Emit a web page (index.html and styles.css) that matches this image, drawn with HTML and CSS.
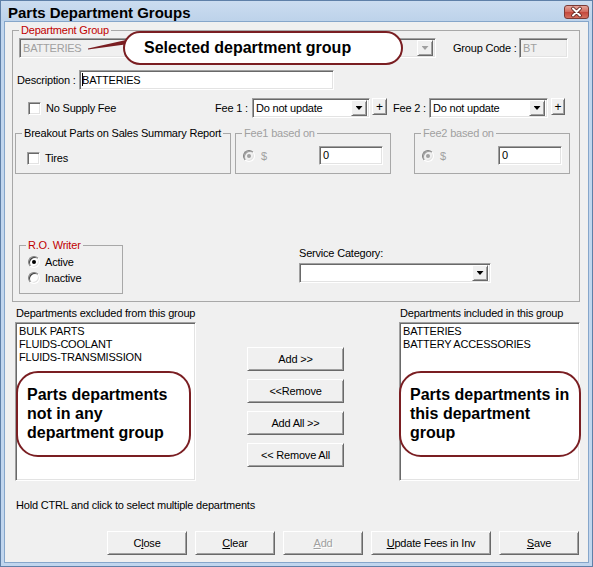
FILE: index.html
```html
<!DOCTYPE html>
<html lang="en">
<head>
    <meta charset="UTF-8">
    <title>Parts Department Groups</title>
    <link rel="stylesheet" href="styles.css">
</head>
<body>
    <div class="window">
        <div class="titlebar">
            <span class="title">Parts Department Groups</span>
            <span class="close-btn">
                <svg width="25" height="14" viewBox="0 0 25 14">
                    <path d="M9 3.5 L16 10.5 M16 3.5 L9 10.5" stroke="#5a1f1a" stroke-width="3.6" stroke-linecap="round"/>
                    <path d="M9 3.5 L16 10.5 M16 3.5 L9 10.5" stroke="#fff" stroke-width="2" stroke-linecap="round"/>
                </svg>
            </span>
        </div>

        <div class="client">
            <fieldset class="group main-group">
                <legend class="red">Department Group</legend>

                <div class="row row-group">
                    <div class="combo sunken disabled-field combo-group">
                        <span class="combo-text gray">BATTERIES</span>
                        <span class="drop raised off"></span>
                    </div>
                    <span class="lbl lbl-code">Group Code :</span>
                    <div class="field sunken disabled-field field-code"><span class="gray">BT</span></div>

                    <!-- callout -->
                    <svg class="tail" width="40" height="14" viewBox="0 0 40 14">
                        <polygon points="1,10.6 38,2.2 38,6.6 1,11.4" fill="#7a1e22"/>
                    </svg>
                    <div class="bubble bubble-top">Selected department group</div>
                </div>

                <div class="row row-desc">
                    <span class="lbl lbl-desc">Description :</span>
                    <div class="field sunken field-desc"><span class="caret"></span>BATTERIES</div>
                </div>

                <div class="row row-fee">
                    <span class="check sunken"></span>
                    <span class="lbl lbl-supply">No Supply Fee</span>
                    <span class="lbl lbl-fee1">Fee 1 :</span>
                    <div class="combo sunken combo-fee1">
                        <span class="combo-text">Do not update</span>
                        <span class="drop raised"></span>
                    </div>
                    <span class="plus raised plus1">+</span>
                    <span class="lbl lbl-fee2">Fee 2 :</span>
                    <div class="combo sunken combo-fee2">
                        <span class="combo-text">Do not update</span>
                        <span class="drop raised"></span>
                    </div>
                    <span class="plus raised plus2">+</span>
                </div>

                <div class="row row-boxes">
                    <fieldset class="group box-breakout">
                        <legend>Breakout Parts on Sales Summary Report</legend>
                        <div class="check-row">
                            <span class="check sunken"></span>
                            <span class="lbl">Tires</span>
                        </div>
                    </fieldset>
                    <fieldset class="group box-fee box-fee1">
                        <legend class="gray-label">Fee1 based on</legend>
                        <div class="fee-row">
                            <span class="radio off checked"></span>
                            <span class="lbl gray-label dollar">$</span>
                            <div class="field sunken field-amt">0</div>
                        </div>
                    </fieldset>
                    <fieldset class="group box-fee box-fee2">
                        <legend class="gray-label">Fee2 based on</legend>
                        <div class="fee-row">
                            <span class="radio off checked"></span>
                            <span class="lbl gray-label dollar">$</span>
                            <div class="field sunken field-amt">0</div>
                        </div>
                    </fieldset>
                </div>

                <div class="row row-writer">
                    <fieldset class="group box-writer">
                        <legend class="red">R.O. Writer</legend>
                        <div class="radio-row first">
                            <span class="radio checked"></span>
                            <span class="lbl">Active</span>
                        </div>
                        <div class="radio-row">
                            <span class="radio"></span>
                            <span class="lbl">Inactive</span>
                        </div>
                    </fieldset>
                    <div class="service">
                        <div class="lbl service-label">Service Category:</div>
                        <div class="combo sunken combo-service">
                            <span class="combo-text"></span>
                            <span class="drop raised"></span>
                        </div>
                    </div>
                </div>
            </fieldset>

            <div class="lists">
                <div class="list-col list-left">
                    <div class="lbl list-label">Departments excluded from this group</div>
                    <div class="listbox sunken">
                        <div class="item">BULK PARTS</div>
                        <div class="item">FLUIDS-COOLANT</div>
                        <div class="item">FLUIDS-TRANSMISSION</div>
                        <div class="bubble bubble-list bubble-left">Parts departments<br>not in any<br>department group</div>
                    </div>
                </div>

                <div class="move-col">
                    <button class="btn raised move">Add &gt;&gt;</button>
                    <button class="btn raised move">&lt;&lt;Remove</button>
                    <button class="btn raised move">Add All &gt;&gt;</button>
                    <button class="btn raised move">&lt;&lt; Remove All</button>
                </div>

                <div class="list-col list-right">
                    <div class="lbl list-label">Departments included in this group</div>
                    <div class="listbox sunken">
                        <div class="item">BATTERIES</div>
                        <div class="item">BATTERY ACCESSORIES</div>
                        <div class="bubble bubble-list bubble-right">Parts departments in<br>this department<br>group</div>
                    </div>
                </div>
            </div>

            <div class="hint">Hold CTRL and click to select multiple departments</div>

            <div class="actions">
                <button class="btn raised act">C<u>l</u>ose</button>
                <button class="btn raised act"><u>C</u>lear</button>
                <button class="btn raised act btn-off"><u>A</u>dd</button>
                <button class="btn raised act act-wide"><u>U</u>pdate Fees in Inv</button>
                <button class="btn raised act"><u>S</u>ave</button>
            </div>
        </div>
    </div>
</body>
</html>
```

FILE: styles.css
```css
body {
    margin: 0;
    font-family: "Liberation Sans", Arial, sans-serif;
    font-size: 11px;
    letter-spacing: -0.2px;
    color: #000;
    background: #fff;
}
.window {
    width: 593px;
    height: 567px;
    box-sizing: border-box;
    border: 1px solid #5f80a8;
    background: #c1d6ee;
    display: flex;
    flex-direction: column;
}
.titlebar {
    height: 20px;
    flex: none;
    display: flex;
    align-items: flex-start;
    padding: 0 3px 0 7px;
    background: linear-gradient(#cbdcf0, #bdd2ea);
}
.title {
    flex: 1;
    font-weight: bold;
    font-size: 15px;
    letter-spacing: 0;
    line-height: 15px;
    margin-top: 4px;
}
.close-btn {
    width: 25px;
    height: 14px;
    margin-top: 4px;
    border: 1px solid #7b3a35;
    border-radius: 3px;
    background: linear-gradient(#e5a59b, #d0685c 50%, #c4473b 51%, #d36f5f);
    display: flex;
    align-items: center;
    justify-content: center;
    box-sizing: border-box;
}
.close-btn svg {
    flex: none;
}
.client {
    flex: 1;
    margin: 0 3px 3px;
    border: 1px solid #86a6ca;
    background: #f0f0f0;
}

/* common bits */
.lbl {
    white-space: nowrap;
    line-height: 14px;
}
.red {
    color: #c00000;
}
.gray,
.gray-label {
    color: #a0a0a0;
}
.sunken {
    box-sizing: border-box;
    border: 1px solid;
    border-color: #a0a0a0 #fff #fff #a0a0a0;
    box-shadow: inset 1px 1px 0 #696969, inset -1px -1px 0 #e3e3e3;
    background: #fff;
}
.raised {
    box-sizing: border-box;
    border: 1px solid;
    border-color: #fff #696969 #696969 #fff;
    box-shadow: inset 1px 1px 0 #f0f0f0, inset -1px -1px 0 #a0a0a0;
    background: #f0f0f0;
}
.disabled-field {
    background: #f0f0f0;
}
.group {
    box-sizing: border-box;
    margin: 0;
    padding: 0;
    min-width: 0;
    border: 1px solid #a8a8a8;
}
.group legend {
    padding: 0 2px;
    margin-left: 6px;
    line-height: 14px;
    white-space: nowrap;
}
.row {
    display: flex;
    align-items: center;
}
.field {
    height: 20px;
    padding-left: 3px;
    line-height: 18px;
    white-space: nowrap;
}
.caret {
    display: inline-block;
    width: 1px;
    height: 13px;
    margin-right: -1px;
    vertical-align: -2px;
    background: #000;
}
.combo {
    height: 20px;
    display: flex;
    align-items: center;
    padding: 2px;
}
.combo-text {
    flex: 1;
    padding-left: 1px;
    line-height: 16px;
    white-space: nowrap;
    overflow: hidden;
}
.drop {
    width: 16px;
    height: 16px;
    flex: none;
    display: flex;
    align-items: center;
    justify-content: center;
}
.drop::after {
    content: "";
    width: 7px;
    height: 4px;
    background: #000;
    clip-path: polygon(0 0, 100% 0, 50% 100%);
}
.drop.off::after {
    background: #a0a0a0;
}
.check {
    width: 13px;
    height: 13px;
    flex: none;
}
.radio {
    width: 12px;
    height: 12px;
    flex: none;
    box-sizing: border-box;
    border-radius: 50%;
    border: 1px solid;
    border-color: #808080 #fff #fff #808080;
    box-shadow: inset 1px 1px 0 #404040, inset -1px -1px 0 #e3e3e3;
    background: #fff;
    display: flex;
    align-items: center;
    justify-content: center;
}
.radio.checked::after {
    content: "";
    width: 4px;
    height: 4px;
    border-radius: 50%;
    background: #000;
}
.radio.off {
    background: #f0f0f0;
    box-shadow: inset 1px 1px 0 #a0a0a0, inset -1px -1px 0 #e3e3e3;
}
.radio.off::after {
    background: #a0a0a0;
}
.plus {
    display: flex;
    align-items: center;
    justify-content: center;
    height: 17px;
    align-self: flex-start;
    font-size: 12px;
    line-height: 12px;
}
.btn {
    font-family: inherit;
    font-size: 11px;
    letter-spacing: -0.2px;
    color: #000;
    padding: 0;
    height: 24px;
    line-height: 20px;
    display: block;
}
.btn-off {
    color: #a0a0a0;
    text-shadow: 1px 1px 0 #fff;
}

/* department group box */
.main-group {
    position: relative;
    margin: 1px 0 0 7px;
    width: 568px;
    height: 279px;
}
.row-group {
    position: relative;
    margin: 1px 0 0 6px;
    height: 20px;
}
.combo-group {
    width: 417px;
}
.lbl-code {
    margin-left: 17px;
    width: 66px;
}
.field-code {
    width: 49px;
}
.tail {
    position: absolute;
    left: 68px;
    top: 0;
}
.bubble {
    position: absolute;
    box-sizing: border-box;
    background: #fff;
    border: 2px solid #7a1e22;
    font-weight: bold;
    font-size: 16px;
    letter-spacing: 0;
    color: #000;
}
.bubble-top {
    left: 104px;
    top: -7px;
    width: 280px;
    height: 34px;
    border-radius: 17px;
    padding-left: 19px;
    line-height: 30px;
}
.row-desc {
    margin: 12px 0 0 4px;
    height: 20px;
}
.lbl-desc {
    width: 62px;
}
.field-desc {
    width: 255px;
    padding-left: 2px;
}
.row-fee {
    margin: 8px 0 0 15px;
    height: 20px;
}
.lbl-supply {
    margin-left: 5px;
    width: 169px;
}
.lbl-fee1 {
    width: 37px;
}
.combo-fee1 {
    width: 118px;
}
.plus1 {
    margin-left: 2px;
    width: 15px;
}
.lbl-fee2 {
    margin-left: 6px;
    width: 36px;
}
.combo-fee2 {
    width: 119px;
}
.plus2 {
    margin-left: 3px;
    width: 14px;
}
.row-boxes {
    align-items: flex-start;
    margin: 8px 0 0 2px;
}
.box-breakout {
    width: 216px;
    height: 48px;
}
.check-row {
    display: flex;
    align-items: center;
    margin: 11px 0 0 11px;
}
.check-row .lbl {
    margin-left: 5px;
}
.box-fee {
    width: 156px;
    height: 48px;
}
.box-fee1 {
    margin-left: 4px;
}
.box-fee2 {
    margin-left: 23px;
}
.fee-row {
    display: flex;
    align-items: center;
    margin-top: 6px;
    height: 19px;
}
.fee-row .radio {
    margin-left: 7px;
}
.dollar {
    margin-left: 6px;
}
.field-amt {
    width: 64px;
    height: 19px;
    line-height: 17px;
    margin: 0 7px 0 auto;
}
.row-writer {
    align-items: flex-start;
    margin-top: 64px;
}
.box-writer {
    margin-left: 6px;
    width: 104px;
    height: 56px;
    padding-top: 2px;
}
.radio-row {
    display: flex;
    align-items: center;
    height: 16px;
    padding-left: 8px;
}
.radio-row .lbl {
    margin-left: 5px;
}
.service {
    margin-left: 176px;
}
.service-label {
    margin-top: 8px;
}
.combo-service {
    margin-top: 3px;
    width: 192px;
}

/* department lists */
.lists {
    display: flex;
    margin-top: 4px;
}
.list-col {
    width: 181px;
}
.list-left {
    margin-left: 10px;
}
.list-right {
    margin-left: 55px;
}
.list-label {
    padding-left: 1px;
}
.listbox {
    position: relative;
    margin-top: 2px;
    height: 159px;
    padding: 2px 3px;
}
.item {
    line-height: 13px;
    white-space: nowrap;
}
.bubble-list {
    top: 48px;
    height: 86px;
    border-radius: 22px;
    padding: 12px 0 0 9px;
    line-height: 19px;
}
.bubble-left {
    left: 0;
    width: 175px;
}
.bubble-right {
    left: -1px;
    width: 182px;
}
.move-col {
    margin-left: 51px;
    padding-top: 41px;
}
.move {
    width: 97px;
    margin-bottom: 8px;
}
.hint {
    margin: 17px 0 0 11px;
    line-height: 14px;
}
.actions {
    display: flex;
    gap: 8px;
    margin: 19px 0 0 102px;
}
.act {
    width: 80px;
}
.act-wide {
    width: 120px;
}
```
